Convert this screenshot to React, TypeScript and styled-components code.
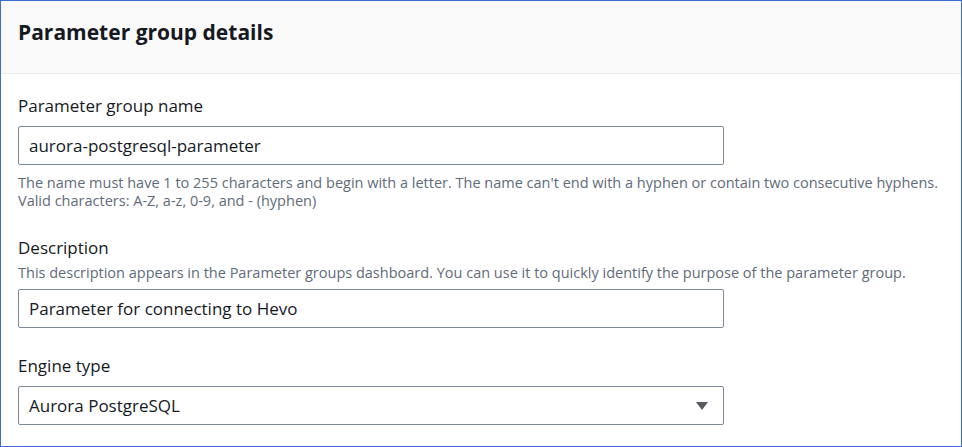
import { createGlobalStyle, styled } from 'styled-components';

const GlobalStyle = createGlobalStyle`
  body {
    margin: 0;
    background: #fff;
    font-family: 'Open Sans', 'Noto Sans', Arial, sans-serif;
    color: #16191f;
  }
`;

const fields = {
  name: 'aurora-postgresql-parameter',
  description: 'Parameter for connecting to Hevo',
  engine: 'Aurora PostgreSQL',
};

export default function App() {
  return (
    <>
      <GlobalStyle />
      <Frame>
        <Header>
          <Title>Parameter group details</Title>
        </Header>
        <Body>
          <Field>
            <Label>Parameter group name</Label>
            <Input>{fields.name}</Input>
            <Hint $top={9}>
              The name must have 1 to 255 characters and begin with a letter. The name can't end with a hyphen or
              contain two consecutive hyphens.
              <br />
              Valid characters: A-Z, a-z, 0-9, and - (hyphen)
            </Hint>
          </Field>
          <Field>
            <Label>Description</Label>
            <Hint $top={-4} $bottom={7}>
              This description appears in the Parameter groups dashboard. You can use it to quickly identify the
              purpose of the parameter group.
            </Hint>
            <Input>{fields.description}</Input>
          </Field>
          <Field>
            <Label>Engine type</Label>
            <Select>
              <span>{fields.engine}</span>
              <Caret viewBox="0 0 14 10">
                <path d="M1 1h12L7 9z" fill="#545b64" />
              </Caret>
            </Select>
          </Field>
        </Body>
      </Frame>
    </>
  );
}

const Frame = styled.div`
  box-sizing: border-box;
  width: 962px;
  height: 447px;
  border: 1px solid #3a6fd0;
  overflow: hidden;
`;

const Header = styled.div`
  height: 72px;
  display: flex;
  align-items: center;
  padding: 0 17px;
  background-color: #fafafa;
  border-bottom: 1px solid #e9ebed;
`;

const Title = styled.h2`
  margin: 0 0 10px;
  font-size: 21px;
  font-weight: 700;
  color: #16191f;
  white-space: nowrap;
`;

const Body = styled.div`
  display: flex;
  flex-direction: column;
  gap: 27px;
  padding: 21px 17px 0;
`;

const Field = styled.div`
  display: flex;
  flex-direction: column;
  align-items: flex-start;
`;

const Label = styled.div`
  font-size: 17px;
  line-height: 22px;
  margin-bottom: 9px;
  color: #16191f;
`;

const Hint = styled.div<{ $top?: number; $bottom?: number }>`
  font-size: 14.5px;
  line-height: 18px;
  color: #5f6b7a;
  white-space: nowrap;
  margin-top: ${(p) => `${p.$top ?? 0}px`};
  margin-bottom: ${(p) => `${p.$bottom ?? 0}px`};
`;

const Input = styled.div`
  box-sizing: border-box;
  width: 706px;
  height: 39px;
  display: flex;
  align-items: center;
  padding: 0 10px;
  border: 1px solid #7d8998;
  border-radius: 2px;
  font-size: 17px;
  color: #16191f;
`;

const Select = styled(Input)`
  justify-content: space-between;
  padding-right: 14px;
`;

const Caret = styled.svg`
  width: 14px;
  height: 10px;
`;
